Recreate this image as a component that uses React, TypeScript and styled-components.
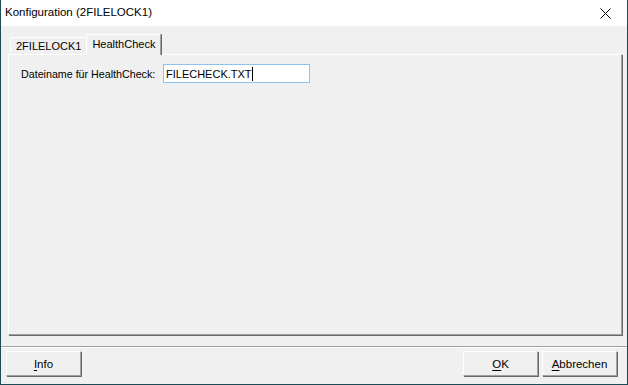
import React, { FC, useState } from "react";
import styled, { createGlobalStyle, css } from "styled-components";

const GlobalStyle = createGlobalStyle`
  html, body {
    margin: 0;
    padding: 0;
    background: #ffffff;
  }
  body {
    font-family: "Liberation Sans", Arial, sans-serif;
    font-size: 11px;
    color: #000000;
  }
`;

const Window = styled.div`
  box-sizing: border-box;
  width: 628px;
  height: 385px;
  display: flex;
  flex-direction: column;
  background: #f0f0f0;
  border: 1px solid #1c4b56;
  border-top: none;
`;

const TitleBar = styled.div`
  height: 26px;
  flex: none;
  display: flex;
  align-items: center;
  justify-content: space-between;
  background: #ffffff;
  padding: 0 0 0 4px;
`;

const Title = styled.span`
  font-size: 11.5px;
  line-height: 1;
  margin-top: -1px;
`;

const CloseButton = styled.button`
  width: 46px;
  height: 26px;
  border: none;
  background: transparent;
  display: flex;
  align-items: center;
  justify-content: center;
  padding: 0 0 0 2px;
`;

const Body = styled.div`
  display: flex;
  flex-direction: column;
  padding: 8px 5px 0 7px;
`;

const TabStrip = styled.div`
  display: flex;
  align-items: flex-end;
  height: 20px;
  padding-left: 2px;
  position: relative;
  z-index: 1;
`;

const Tab = styled.div<{ $active?: boolean }>`
  box-sizing: border-box;
  height: 17px;
  padding: 0 5px;
  display: flex;
  align-items: center;
  white-space: nowrap;
  border-top: 1px solid #ffffff;
  border-left: 1px solid #ffffff;
  border-right: 1px solid #a0a0a0;
  box-shadow: 1px 0 0 #696969;
  margin-right: 1px;
  background: #f0f0f0;
  ${({ $active }) =>
    $active &&
    css`
      height: 21px;
      margin-bottom: -1px;
      margin-left: -2px;
      margin-right: 0;
      padding: 0 5px 2px 5px;
    `}
`;

const Panel = styled.div`
  box-sizing: border-box;
  height: 281px;
  border-top: 1px solid #ffffff;
  border-left: 1px solid #ffffff;
  border-right: 1px solid #a0a0a0;
  border-bottom: 1px solid #a0a0a0;
  box-shadow: 1px 1px 0 #696969;
  padding: 9px 12px;
`;

const FieldRow = styled.div`
  display: flex;
  align-items: center;
`;

const Label = styled.label`
  width: 142px;
  flex: none;
  white-space: nowrap;
  font-size: 10.7px;
`;

const TextBox = styled.div`
  box-sizing: border-box;
  width: 147px;
  height: 19px;
  border: 1px solid #8ec3ee;
  background: #ffffff;
  padding: 0 2px;
  display: flex;
  align-items: center;
  white-space: nowrap;
`;

const Caret = styled.span`
  display: inline-block;
  width: 1px;
  height: 14px;
  background: #000000;
`;

const Separator = styled.div`
  margin-top: 11px;
  height: 1px;
  background: #a0a0a0;
  border-bottom: 1px solid #ffffff;
`;

const Footer = styled.div`
  display: flex;
  justify-content: space-between;
  padding: 3px 10px 0 5px;
`;

const ButtonGroup = styled.div`
  display: flex;
  gap: 4px;
`;

const DialogButton = styled.button`
  box-sizing: border-box;
  width: 75px;
  height: 25px;
  background: #f0f0f0;
  border: none;
  border-top: 1px solid #ffffff;
  border-left: 1px solid #ffffff;
  border-right: 1px solid #a0a0a0;
  border-bottom: 1px solid #a0a0a0;
  box-shadow: 1px 1px 0 #696969;
  font-family: "Liberation Sans", Arial, sans-serif;
  font-size: 11.5px;
  color: #000000;
  padding: 0;
  u {
    text-decoration: underline;
    text-underline-offset: 2px;
  }
`;

const CloseIcon: FC = () => (
  <svg width="11" height="11" viewBox="0 0 11 11">
    <path d="M0.5 0.5 L10.5 10.5 M10.5 0.5 L0.5 10.5" stroke="#000" strokeWidth="1" fill="none" />
  </svg>
);

const App: FC = () => {
  const [fileName] = useState("FILECHECK.TXT");

  return (
    <>
      <GlobalStyle />
      <Window>
        <TitleBar>
          <Title>Konfiguration (2FILELOCK1)</Title>
          <CloseButton>
            <CloseIcon />
          </CloseButton>
        </TitleBar>
        <Body>
          <TabStrip>
            <Tab>2FILELOCK1</Tab>
            <Tab $active>HealthCheck</Tab>
          </TabStrip>
          <Panel>
            <FieldRow>
              <Label>Dateiname für HealthCheck:</Label>
              <TextBox>
                {fileName}
                <Caret />
              </TextBox>
            </FieldRow>
          </Panel>
        </Body>
        <Separator />
        <Footer>
          <DialogButton>
            <u>I</u>nfo
          </DialogButton>
          <ButtonGroup>
            <DialogButton>
              <u>O</u>K
            </DialogButton>
            <DialogButton>
              <u>A</u>bbrechen
            </DialogButton>
          </ButtonGroup>
        </Footer>
      </Window>
    </>
  );
};

export default App;
